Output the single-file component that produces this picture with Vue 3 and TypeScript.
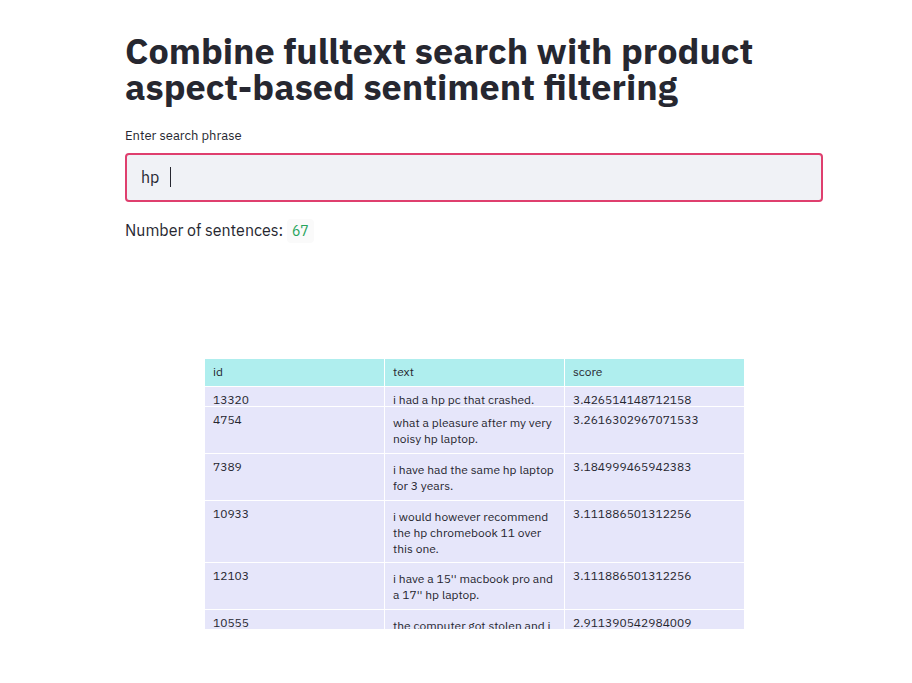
<script setup lang="ts">
import { ref } from 'vue'

interface Row {
  id: number
  text: string
  score: string
  compact?: boolean
}

const phrase = ref('hp ')
const rows: Row[] = [
  { id: 13320, text: 'i had a hp pc that crashed.', score: '3.426514148712158', compact: true },
  { id: 4754, text: 'what a pleasure after my very noisy hp laptop.', score: '3.2616302967071533' },
  { id: 7389, text: 'i have had the same hp laptop for 3 years.', score: '3.184999465942383' },
  { id: 10933, text: 'i would however recommend the hp chromebook 11 over this one.', score: '3.111886501312256' },
  { id: 12103, text: "i have a 15'' macbook pro and a 17'' hp laptop.", score: '3.111886501312256' },
  { id: 10555, text: 'the computer got stolen and i', score: '2.911390542984009' },
]
</script>

<template>
  <main class="page">
    <h1>Combine fulltext search with product aspect-based sentiment filtering</h1>
    <label for="phrase">Enter search phrase</label>
    <div class="field">
      <input id="phrase" v-model="phrase" type="text" autocomplete="off" />
      <span class="caret" aria-hidden="true"></span>
    </div>
    <p class="count">Number of sentences: <code>67</code></p>
    <div class="results">
      <table>
        <thead>
          <tr>
            <th scope="col">id</th>
            <th scope="col">text</th>
            <th scope="col">score</th>
          </tr>
        </thead>
        <tbody>
          <tr v-for="row in rows" :key="row.id" :class="{ compact: row.compact }">
            <td><div class="cell">{{ row.id }}</div></td>
            <td><div class="cell wrap">{{ row.text }}</div></td>
            <td><div class="cell">{{ row.score }}</div></td>
          </tr>
        </tbody>
      </table>
    </div>
  </main>
</template>

<style>
body {
  background: #fff;
}
</style>

<style scoped>
.page {
  padding: 33px 89px 0 125px;
  color: #262730;
  font-family: "IBM Plex Sans", "Noto Sans", sans-serif;
  font-size: 16px;
}

h1 {
  margin: 0 0 21px;
  font-size: 36px;
  font-weight: 700;
  line-height: 36px;
}

label {
  display: block;
  margin-bottom: 7px;
  font-size: 13px;
  line-height: 20px;
}

.field {
  position: relative;
}

input {
  display: block;
  box-sizing: border-box;
  width: 100%;
  height: 49px;
  margin: 0;
  padding: 0 14px 2px;
  border: 2px solid #df3f6e;
  border-radius: 4px;
  outline: none;
  background: #f0f2f6;
  color: #262730;
  caret-color: transparent;
  font-family: inherit;
  font-size: 16px;
}

.caret {
  position: absolute;
  top: 14px;
  left: 45px;
  width: 1px;
  height: 20px;
  background: #262730;
}

.count {
  margin: 15px 0 0;
  line-height: 26px;
}

code {
  padding: 3px 5px;
  border-radius: 4px;
  background: #fafafa;
  color: #26a45b;
  font-family: "IBM Plex Mono", "IBM Plex Sans", "Liberation Mono", monospace;
  font-size: 14px;
}

.results {
  height: 270px;
  margin: 115px 79px 0 80px;
  overflow: hidden;
}

table {
  width: 100%;
  border-collapse: separate;
  border-spacing: 0;
  table-layout: fixed;
  font-size: 12px;
  line-height: 16px;
}

th,
td {
  box-sizing: border-box;
  border-right: 1px solid #fff;
  border-bottom: 1px solid #fff;
  text-align: left;
  vertical-align: top;
}

th:last-child,
td:last-child {
  border-right: 0;
}

th {
  height: 28px;
  padding: 5px 8px;
  background: #afeeee;
  font-weight: 400;
}

th:last-child {
  width: 179px;
}

td {
  height: 47px;
  padding: 0;
  background: #e6e6fa;
}

.cell {
  padding: 5px 8px;
}

.wrap {
  padding-top: 8px;
}

.compact td {
  height: 20px;
}

.compact .cell {
  box-sizing: border-box;
  height: 19px;
  padding: 5px 8px 0;
  overflow: hidden;
}
</style>
